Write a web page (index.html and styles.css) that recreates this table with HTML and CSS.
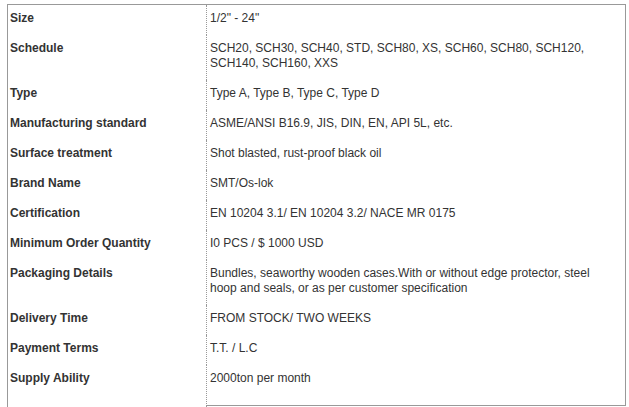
FILE: index.html
```html
<!DOCTYPE html>
<html>
<head>
<meta charset="utf-8">
<link rel="stylesheet" href="styles.css">
</head>
<body>
<div class="spec">
  <div class="row"><div class="label">Size</div><div class="value">1/2" - 24"</div></div>
  <div class="row"><div class="label">Schedule</div><div class="value">SCH20, SCH30, SCH40, STD, SCH80, XS, SCH60, SCH80, SCH120, SCH140, SCH160, XXS</div></div>
  <div class="row"><div class="label">Type</div><div class="value">Type A, Type B, Type C, Type D</div></div>
  <div class="row"><div class="label">Manufacturing standard</div><div class="value">ASME/ANSI B16.9, JIS, DIN, EN, API 5L, etc.</div></div>
  <div class="row"><div class="label">Surface treatment</div><div class="value">Shot blasted, rust-proof black oil</div></div>
  <div class="row"><div class="label">Brand Name</div><div class="value">SMT/Os-lok</div></div>
  <div class="row"><div class="label">Certification</div><div class="value">EN 10204 3.1/ EN 10204 3.2/ NACE MR 0175</div></div>
  <div class="row"><div class="label">Minimum Order Quantity</div><div class="value">I0 PCS / $ 1000 USD</div></div>
  <div class="row"><div class="label">Packaging Details</div><div class="value">Bundles, seaworthy wooden cases.With or without edge protector, steel hoop and seals, or as per customer specification</div></div>
  <div class="row"><div class="label">Delivery Time</div><div class="value">FROM STOCK/ TWO WEEKS</div></div>
  <div class="row"><div class="label">Payment Terms</div><div class="value">T.T. / L.C</div></div>
  <div class="row last"><div class="label">Supply Ability</div><div class="value">2000ton per month</div></div>
  <div class="row filler"><div class="label"></div><div class="value"></div></div>
</div>
</body>
</html>
```

FILE: styles.css
```css
html, body {
  margin: 0;
  padding: 0;
  background: #fff;
}
body {
  padding: 4px 0 0 7px;
  font-family: "Liberation Sans", Arial, sans-serif;
  font-size: 12px;
  line-height: 15px;
  color: #333;
}
.spec {
  width: 619px;
  border-top: 1px solid #999;
}
.row {
  display: grid;
  grid-template-columns: 199px 1fr;
}
.label {
  border-left: 1px solid #999;
  padding: 6px 0 9px 2px;
  font-weight: bold;
  color: #333;
}
.value {
  border-left: 1px dotted #999;
  border-right: 1px solid #999;
  padding: 6px 8px 9px 3px;
  color: #333;
}
.row.last .value {
  border-bottom: 1px solid #999;
  padding-bottom: 19px;
}
.row.filler .label,
.row.filler .value {
  height: 20px;
  padding: 0;
}
.row.filler .value {
  border-right: none;
}
```
